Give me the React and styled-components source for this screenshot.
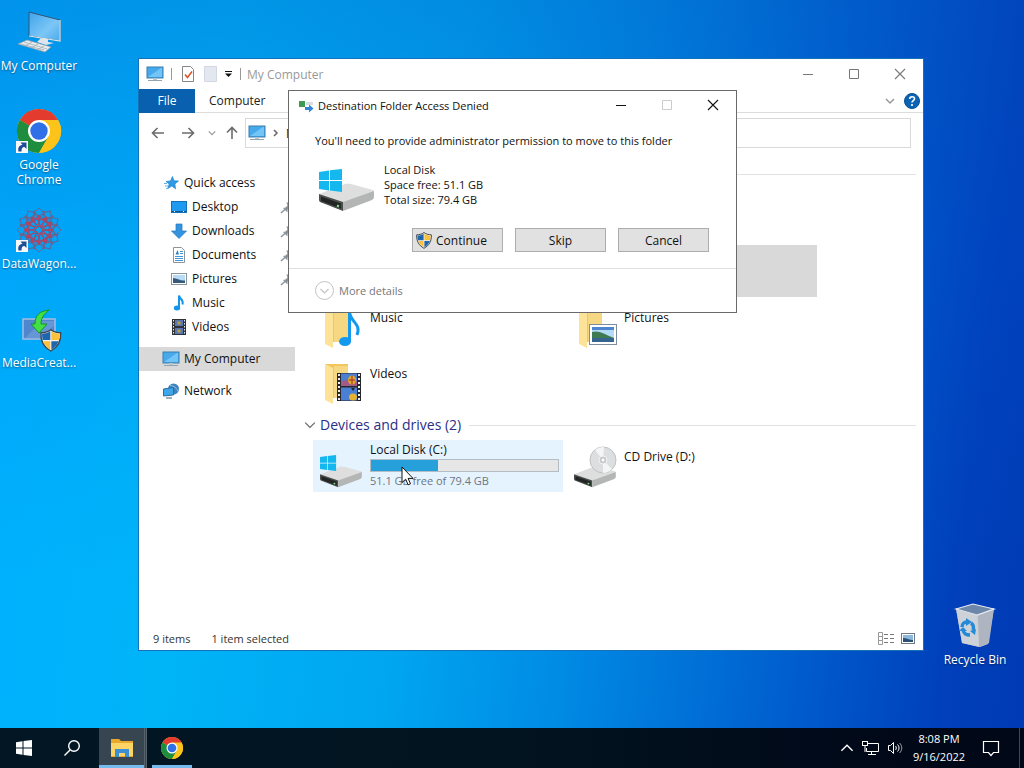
import React from "react";
import styled, { createGlobalStyle, css } from "styled-components";

const GlobalStyle = createGlobalStyle`
  *, *::before, *::after { box-sizing: border-box; }
  body {
    margin: 0;
    font-family: "Open Sans", "Noto Sans", "Liberation Sans", sans-serif;
    font-size: 12px;
    line-height: 15px;
    color: #111;
  }
  button, input { font: inherit; color: inherit; }
  svg { display: block; flex: none; }
`;

/* ---------- desktop ---------- */

const Screen = styled.div`
  min-height: 100vh;
  display: flex;
  flex-direction: column;
  background:
    linear-gradient(180deg, rgba(4, 80, 190, 0.3) 0%, rgba(0, 90, 220, 0.12) 35%, rgba(0, 90, 220, 0) 75%),
    linear-gradient(97deg, #00b0ff 0%, #00b4f8 22%, #00a6f0 42%, #008ae4 58%, #005ece 78%, #0040ba 92%, #003ab4 100%);
`;

const Workspace = styled.main`
  position: relative;
  flex: 1;
  min-height: 728px;
`;

const IconColumn = styled.nav`
  display: flex;
  flex-direction: column;
  width: 78px;
  padding-top: 8px;
`;

const Shortcut = styled.a`
  display: flex;
  flex-direction: column;
  align-items: center;
  gap: 2px;
  height: 99px;
  color: #fff;
  text-align: center;
  text-decoration: none;
  text-shadow: 0 1px 2px rgba(0, 0, 0, 0.45);
`;

const BinSpot = styled.div`
  position: absolute;
  right: 9px;
  bottom: 27px;
  width: 80px;
`;

/* ---------- explorer ---------- */

const Explorer = styled.section`
  position: absolute;
  inset: 58px 100px 77px 138px;
  display: flex;
  flex-direction: column;
  border: 1px solid #1672b8;
  background: #fff;
`;

const TitleBar = styled.header`
  display: flex;
  align-items: center;
  height: 30px;
  padding-left: 7px;
  color: #999;
`;

const Divider = styled.span`
  width: 1px;
  height: 12px;
  background: #999;
`;

const QuickTools = styled.div`
  display: flex;
  align-items: center;
  gap: 7px;
  margin-right: 6px;
`;

const WindowControls = styled.div`
  display: flex;
  align-self: stretch;
  margin-left: auto;
`;

const IconButton = styled.button`
  display: flex;
  align-items: center;
  justify-content: center;
  width: ${(p) => p.$w || 46}px;
  height: ${(p) => p.$h || 30}px;
  padding: 0;
  border: 0;
  background: transparent;
`;

const Ribbon = styled.div`
  display: flex;
  align-items: center;
  height: 24px;
  border-bottom: 1px solid #dcdcdc;
`;

const Tab = styled.button`
  height: 24px;
  padding: 0 14px;
  border: 0;
  background: transparent;
  color: #222;
  ${(p) =>
    p.$primary &&
    css`
      width: 56px;
      background: #0860ae;
      color: #fff;
    `}
`;

const RibbonEnd = styled.div`
  display: flex;
  align-items: center;
  margin-left: auto;
  padding-right: 3px;
`;

const NavBar = styled.div`
  display: flex;
  align-items: center;
  height: 40px;
  padding: 0 12px 0 4px;
`;

const Address = styled.div`
  display: flex;
  align-items: center;
  gap: 5px;
  flex: 1;
  height: 30px;
  margin-left: 2px;
  padding-left: 2px;
  border: 1px solid #d9d9d9;
`;

const Body = styled.div`
  display: flex;
  flex: 1;
`;

const Sidebar = styled.nav`
  width: 156px;
  padding-top: 18px;
`;

const SideItem = styled.a`
  display: flex;
  align-items: center;
  gap: 4px;
  height: 24px;
  padding: 0 0 1px ${(p) => (p.$nested ? 31 : 23)}px;
  margin-bottom: ${(p) => (p.$gap ? 8 : 0)}px;
  background: ${(p) => (p.$active ? "#d9d9d9" : "transparent")};
  color: #111;
  text-decoration: none;
`;

const PinSlot = styled.span`
  margin-left: auto;
`;

const Content = styled.div`
  flex: 1;
  padding: 10px 7px 0 9px;
`;

const GroupHeader = styled.h2`
  display: flex;
  align-items: center;
  gap: 4px;
  height: 22px;
  margin: 0;
  font-size: 14px;
  font-weight: 400;
  line-height: 20px;
  color: #2a2f86;
  &::after {
    content: "";
    flex: 1;
    height: 1px;
    margin-left: 4px;
    background: #e2e2e2;
  }
`;

const Tiles = styled.div`
  display: grid;
  grid-template-columns: repeat(auto-fill, 250px);
  gap: 4px;
  padding: 4px 0 5px 9px;
`;

const Tile = styled.div`
  display: flex;
  gap: 5px;
  height: 52px;
  padding: 2px 4px;
  background: ${(p) => p.$fill || "transparent"};
`;

const TileText = styled.div`
  flex: 1;
  padding-top: ${(p) => (p.$detail ? 0 : 7)}px;
`;

const Capacity = styled.div`
  height: 13px;
  margin: 2px 0 1px;
  border: 1px solid #b4bcc4;
  background: #e6e6e6;
`;

const Used = styled.div`
  height: 100%;
  background: #26a0da;
`;

const Muted = styled.div`
  font-size: 11px;
  color: #6d7680;
`;

const StatusBar = styled.footer`
  display: flex;
  align-items: center;
  gap: 21px;
  height: 23px;
  padding: 0 8px 0 14px;
  font-size: 11px;
  color: #333;
`;

const ViewModes = styled.div`
  display: flex;
  gap: 6px;
  margin-left: auto;
`;

/* ---------- dialog ---------- */

const Dialog = styled.section`
  position: absolute;
  top: 90px;
  left: 288px;
  width: 449px;
  border: 1px solid #6a6a6a;
  background: #fff;
  font-size: 11px;
`;

const DialogTitle = styled.header`
  display: flex;
  align-items: center;
  gap: 4px;
  height: 29px;
  padding-left: 9px;
`;

const DialogBody = styled.div`
  padding: 13px 27px 16px 26px;
`;

const Message = styled.p`
  margin: 0 0 14px;
`;

const DiskInfo = styled.div`
  display: flex;
  gap: 9px;
  height: 66px;
`;

const Actions = styled.div`
  display: flex;
  justify-content: flex-end;
  gap: 12px;
  font-size: 12px;
`;

const ActionButton = styled.button`
  display: flex;
  align-items: center;
  justify-content: center;
  gap: 4px;
  width: 91px;
  height: 24px;
  padding: ${(p) => (p.$shield ? "0 12px 0 0" : "0")};
  border: 1px solid #adadad;
  background: #e1e1e1;
`;

const Details = styled.footer`
  display: flex;
  align-items: center;
  height: 44px;
  padding-left: 25px;
  border-top: 1px solid #dfdfdf;
`;

const DetailsToggle = styled.button`
  display: flex;
  align-items: center;
  gap: 4px;
  padding: 0;
  border: 0;
  background: transparent;
  color: #777;
`;

const Pointer = styled.div`
  position: absolute;
  left: 401px;
  top: 466px;
  pointer-events: none;
`;

/* ---------- taskbar ---------- */

const Taskbar = styled.footer`
  display: flex;
  align-items: stretch;
  height: 40px;
  background: linear-gradient(90deg, #021624 0%, #021420 50%, #010a1a 80%, #010818 100%);
  color: #fff;
`;

const TaskButton = styled.button`
  display: flex;
  align-items: center;
  justify-content: center;
  width: 48px;
  padding: 0;
  border: 0;
  background: transparent;
  ${(p) =>
    p.$running &&
    css`
      width: 49px;
      background: linear-gradient(#76b9ed, #76b9ed) bottom / 40px 3px no-repeat;
    `}
  ${(p) =>
    p.$focused &&
    css`
      background: linear-gradient(#76b9ed, #76b9ed) bottom / 100% 3px no-repeat, #36454f;
      width: 48px;
      margin-left: 3px;
      border-right: 3px double #56636c;
    `}
`;

const Tray = styled.div`
  display: flex;
  align-items: center;
  gap: 8px;
  margin-left: auto;
  padding-right: 3px;
  border-right: 1px solid #3c4856;
  margin-right: 4px;
`;

const Clock = styled.time`
  text-align: center;
  font-size: 11px;
  line-height: 18px;
  width: 54px;
  white-space: nowrap;
`;

const Notice = styled.span`
  padding: 0 16px 0 8px;
`;

/* ---------- drawings ---------- */

const ShortcutMark = () => (
  <g>
    <rect x="1" y="34" width="12" height="12" fill="#f6f8fa" />
    <path d="M3.500 44.500c-1-4 1-6.500 4-6.500l-2-2.500H11.500V42l-2-2c-2.500 0-3 2-3 4.500z" fill="#1e4f96" />
  </g>
);

const ComputerLarge = () => (
  <svg width="48" height="48" viewBox="0 0 48 48">
    <defs>
      <linearGradient id="scr" x1="0" y1="0" x2="1" y2="1">
        <stop offset="0" stopColor="#3fa3ea" />
        <stop offset=".6" stopColor="#7cc6f6" />
        <stop offset="1" stopColor="#4aabed" />
      </linearGradient>
    </defs>
    <path d="M14 4l31 8v21l-31-5z" fill="url(#scr)" stroke="#2c5776" strokeWidth="1" />
    <path d="M45 12v21l-31-5" fill="none" stroke="#dfe8ee" strokeWidth="1.200" />
    <path d="M26 30l7 1v3l6 1-8 2-9-3z" fill="#dfe5e9" />
    <path d="M12 32l24 7-6 5L3 36z" fill="#e9edef" stroke="#8f9ba3" strokeWidth=".7" />
    <path d="M9 34l23 7M6 36l23 6M17 34l-7 4M23 36l-7 4M29 38l-7 4" stroke="#9aa6ad" strokeWidth=".7" />
  </svg>
);

const ChromeArt = () => (
  <g>
    <circle cx="24" cy="24" r="22" fill="#fbc116" />
    <path d="M24 24L4.900 13A22 22 0 0 1 43.100 13z" fill="#e33b2e" />
    <path d="M4.900 13A22 22 0 0 0 24 46l9.500-16.500L24 24z" fill="#1e8e3e" />
    <path d="M24 13h19.100A22 22 0 0 1 24 46l9.500-16.500z" fill="#fcc31a" />
    <circle cx="24" cy="24" r="11" fill="#fff" />
    <circle cx="24" cy="24" r="8.700" fill="#2f6fe8" />
  </g>
);

const ChromeLarge = () => (
  <svg width="48" height="48" viewBox="0 0 48 48">
    <ChromeArt />
    <ShortcutMark />
  </svg>
);

const WagonLarge = () => (
  <svg width="48" height="48" viewBox="0 0 48 48">
    <g fill="none" strokeWidth="1">
      {[0, 30, 60, 90, 120, 150, 180, 210, 240, 270, 300, 330].map((a) => (
        <g key={a} transform={`rotate(${a} 24 24)`}>
          <path d="M24 2l5 5-5 6-5-6z" stroke="#5f6596" />
          <path d="M18 5l12 11M30 5L18 16" stroke="#746088" />
          <path d="M24 9l5 7-5 5-5-5z" stroke="#a44566" />
          <circle cx="24" cy="12" r="1.300" fill="#c93a55" stroke="none" />
        </g>
      ))}
    </g>
    <ShortcutMark />
  </svg>
);

const ShieldArt = () => (
  <g>
    <path d="M8 .5c2 1.700 4.500 2.200 7.300 2.300C15.700 9 13 13.700 8 16.300 3 13.700.3 9 .7 2.800 3.500 2.700 6 2.200 8 .5z" fill="#f3f3ee" stroke="#3f464c" strokeWidth="1" />
    <path d="M7.600 1.700C6 2.900 4 3.400 1.500 3.600c0 1.900.2 3.100.5 4.600h5.600z" fill="#1d65ad" />
    <path d="M8.400 1.700c1.600 1.200 3.600 1.700 6.100 1.900 0 1.900-.2 3.100-.5 4.600H8.400z" fill="#fbc13d" />
    <path d="M2.200 9h5.400v6.200C5 13.700 3.100 11.500 2.200 9z" fill="#fbc13d" />
    <path d="M13.800 9H8.400v6.200c2.600-1.500 4.500-3.700 5.400-6.200z" fill="#1d65ad" />
  </g>
);

const MediaLarge = () => (
  <svg width="48" height="48" viewBox="0 0 48 48">
    <rect x="8" y="14" width="32" height="20" fill="#4f86cd" stroke="#a6bfe0" strokeWidth="1.500" />
    <path d="M10 33l17-17h12v5L24 33z" fill="#7ba6de" opacity=".5" />
    <path d="M34 5c-9 1-14 5-14 14h-4l8 9 8-9h-6c0-6 3-10 8-14z" fill="#43df46" stroke="#17932b" strokeWidth="1" />
    <g transform="translate(25 24) scale(1.350)">
      <ShieldArt />
    </g>
  </svg>
);

const BinLarge = () => (
  <svg width="48" height="48" viewBox="0 0 48 48">
    <path d="M5 6l38 0-6 36-8 3-18-4z" fill="#c4c9d2" />
    <path d="M27 12l16-6-5 35-10 4z" fill="#aeb5c0" />
    <path d="M5 7l17-5 21 5-17 6z" fill="#6d87a8" stroke="#e6ebf2" strokeWidth="1.200" />
    <path d="M5 7l21 6 2 32-17-4z" fill="#cfd3da" opacity=".85" />
    <g fill="none" stroke="#2489d6" strokeWidth="3.400">
      <path d="M11 25c0-3 2-5 5-5" />
      <path d="M20 21c3 2 3 4 2 7" />
      <path d="M19 33c-4 0-6-1-7-5" />
    </g>
    <path d="M15 16l6 4-6 4zM25 27l-1 6-5-4zM8 29l4-4 4 4z" fill="#2489d6" />
  </svg>
);

const Monitor = ({ w = 18 }) => (
  <svg width={w} height="16" viewBox="0 0 18 16">
    <rect x="1" y="1" width="16" height="11" fill="#46a9ec" stroke="#3b7fae" />
    <path d="M2 11l13-9h1v9z" fill="#74c5f7" />
    <path d="M7 12h4v2H7z" fill="#b9c6cf" />
    <path d="M2 14.500h14" stroke="#93a4b0" />
  </svg>
);

const CheckPage = () => (
  <svg width="14" height="16" viewBox="0 0 14 16">
    <path d="M1.500.5h8l3 3v12h-11z" fill="#fff" stroke="#858585" />
    <path d="M4 8.500l2.500 3 4.500-6" fill="none" stroke="#d9582e" strokeWidth="1.600" />
  </svg>
);

const BlankPage = () => (
  <svg width="14" height="16" viewBox="0 0 14 16">
    <path d="M.5.500h12v15H.5z" fill="#e3e8f0" stroke="#d2d8e2" />
  </svg>
);

const MenuTick = () => (
  <svg width="8" height="8" viewBox="0 0 8 8">
    <path d="M0 1.500h7" stroke="#111" />
    <path d="M0 3.500h7L3.500 7z" fill="#111" />
  </svg>
);

const Minimize = ({ color = "#777" }) => (
  <svg width="12" height="12" viewBox="0 0 12 12">
    <path d="M1 6.500h10" stroke={color} />
  </svg>
);
const Maximize = ({ color = "#777" }) => (
  <svg width="12" height="12" viewBox="0 0 12 12">
    <path d="M1.500 1.500h9v9h-9z" fill="none" stroke={color} />
  </svg>
);
const Close = ({ color = "#777" }) => (
  <svg width="12" height="12" viewBox="0 0 12 12">
    <path d="M1 1l10 10M11 1L1 11" stroke={color} strokeWidth="1.100" />
  </svg>
);

const Chevron = ({ size = 10, color = "#999", dir = "down", weight = 1.5 }) => (
  <svg width={size} height={size} viewBox="0 0 10 10">
    <path
      d={dir === "down" ? "M1 3l4 4 4-4" : dir === "up" ? "M1 7l4-4 4 4" : "M3 2l3 3-3 3"}
      fill="none"
      stroke={color}
      strokeWidth={weight}
    />
  </svg>
);

const Arrow = ({ dir }) => (
  <svg width="14" height="14" viewBox="0 0 14 14">
    <g transform={`rotate(${dir === "left" ? 0 : dir === "up" ? 90 : 180} 7 7)`}>
      <path d="M13 7H1.500M6.500 2l-5 5 5 5" fill="none" stroke="#6b6b6b" strokeWidth="1.600" />
    </g>
  </svg>
);

const Help = () => (
  <svg width="16" height="16" viewBox="0 0 16 16">
    <circle cx="8" cy="8" r="7.500" fill="#0a63b4" stroke="#07508f" />
    <path d="M5.700 6c0-3 4.800-3 4.800-.2C10.500 7.600 8 7.600 8 9.500" fill="none" stroke="#fff" strokeWidth="1.600" />
    <circle cx="8" cy="12" r="1.100" fill="#fff" />
  </svg>
);

const StarIcon = () => (
  <svg width="18" height="16" viewBox="0 0 18 16">
    <path d="M10.500 1.500l1.400 4.300 4.600.2-3.600 3 .6 4.800-3.700-2.800-4 2.500 1.400-4.600L4 6.500l4.500-.6z" fill="#2f9be6" stroke="#2383c9" strokeWidth=".7" />
    <path d="M2 8.500h3M3 11h3M4 13.500h2" stroke="#5fb2ec" />
  </svg>
);
const DesktopIcon = () => (
  <svg width="18" height="16" viewBox="0 0 18 16">
    <rect x="1.500" y="2.500" width="15" height="11" fill="#1e9bf0" stroke="#176fb5" />
    <path d="M2 12.500h14" stroke="#0d5795" />
    <path d="M4 12.500h1M13 12.500h1" stroke="#fff" />
  </svg>
);
const DownloadIcon = () => (
  <svg width="18" height="16" viewBox="0 0 18 16">
    <path d="M6 1h6v7h4.500L9 15.500 1.500 8H6z" fill="#3594e0" stroke="#2377bb" strokeWidth=".7" />
  </svg>
);
const DocumentIcon = () => (
  <svg width="18" height="16" viewBox="0 0 18 16">
    <path d="M3.500.5h8l3 3v12h-11z" fill="#fff" stroke="#8c959c" />
    <path d="M10 4.500h3M10 6.500h3M5 9.500h8M5 11.500h8M5 13.500h8" stroke="#4497d6" />
    <path d="M5.500 7.500l2-4.500 1.500 4.500z" fill="#2f7fc0" />
  </svg>
);
const PictureIcon = () => (
  <svg width="18" height="16" viewBox="0 0 18 16">
    <rect x="1.500" y="2.500" width="15" height="11" fill="#fff" stroke="#8a949d" />
    <rect x="3" y="4" width="12" height="8" fill="#b9dcf6" />
    <path d="M3 7c4 0 7 3 12 2.500V12H3z" fill="#34597c" />
  </svg>
);
const NoteIcon = () => (
  <svg width="18" height="16" viewBox="0 0 18 16">
    <path d="M9 13V.5c.5 3.500 5 4 3.500 9" fill="none" stroke="#1495ea" strokeWidth="2" />
    <ellipse cx="7" cy="13" rx="3.200" ry="2.500" fill="#1495ea" />
  </svg>
);
const FilmIcon = () => (
  <svg width="18" height="16" viewBox="0 0 18 16">
    <rect x="2" y="0" width="14" height="16" fill="#2e3135" />
    <path d="M3.500 1v15M14.500 1v15" stroke="#e9edf0" strokeDasharray="1.500 1.500" />
    <rect x="5" y="1" width="8" height="6" fill="#5a77b5" />
    <rect x="5" y="9" width="8" height="6" fill="#5a77b5" />
    <circle cx="9" cy="4" r="1.800" fill="#b6a03c" />
    <circle cx="9" cy="12" r="1.800" fill="#b6a03c" />
  </svg>
);
const NetworkIcon = () => (
  <svg width="18" height="16" viewBox="0 0 18 16">
    <circle cx="11.500" cy="6" r="5.500" fill="#3f83bd" />
    <path d="M8 2.500c4 0 7 3 8 6" fill="none" stroke="#8ec9ef" />
    <path d="M1.500 6l10-1.500v7.500l-10 1z" fill="#40a6ea" stroke="#2a6d9f" />
    <path d="M4 15h6" stroke="#7d93a3" strokeWidth="1.500" />
  </svg>
);
const Pin = () => (
  <svg width="15" height="14" viewBox="0 0 15 14">
    <path d="M7 2l6 6-1.500.5-2-.5-2 2v2.500L3 8l2.500-.5 2-2L6.500 3z" fill="#8c959c" />
    <path d="M5 9.500L1 13" stroke="#8c959c" strokeWidth="1.500" />
  </svg>
);

const FolderBack = () => (
  <g transform="translate(3 0)">
    <path d="M6 5h22v34H12L6 36z" fill="#f0c65d" />
    <path d="M14 7h14v32H14z" fill="#f7d882" />
    <path d="M5 5l8 4v36l-8-4z" fill="#fde398" />
  </g>
);
const MusicFolder = () => (
  <svg width="48" height="48" viewBox="0 0 48 48">
    <FolderBack />
    <path d="M32.500 39V9c1 11 12 11 7.500 23" fill="none" stroke="#1399ee" strokeWidth="3" />
    <ellipse cx="28" cy="38.500" rx="6" ry="4.500" fill="#1399ee" />
  </svg>
);
const PictureFolder = () => (
  <svg width="48" height="48" viewBox="0 0 48 48">
    <FolderBack />
    <rect x="18.500" y="21.500" width="27" height="20" fill="#fff" stroke="#7e8d9b" />
    <rect x="21" y="24" width="22" height="15" fill="#b4dbf5" />
    <path d="M21 24h22v3H21z" fill="#4d86cd" />
    <path d="M21 29c7-2 12 2 22 6v1H21z" fill="#3e7b53" />
    <path d="M21 35h22v4H21z" fill="#35648e" />
  </svg>
);
const VideoFolder = () => (
  <svg width="48" height="48" viewBox="0 0 48 48">
    <FolderBack />
    <rect x="20" y="14" width="24" height="28" fill="#26282c" />
    <path d="M22 15v27M42 15v27" stroke="#eef1f4" strokeWidth="2" strokeDasharray="2 2" />
    <rect x="24" y="14.500" width="16" height="12.500" fill="#4a7fd4" />
    <rect x="24" y="28.500" width="16" height="13" fill="#4a7fd4" />
    <path d="M24 23c5-4 9 0 16-1v5H24z" fill="#a25a86" />
    <ellipse cx="35" cy="21" rx="4" ry="4.500" fill="#e0a52d" />
    <path d="M35 16.500v9M32 21h6" stroke="#a72e2d" />
    <ellipse cx="36" cy="38" rx="4" ry="3.500" fill="#e5b331" />
    <path d="M34 29h4l-2 3z" fill="#26282c" />
  </svg>
);

const WindowsFlag = () => (
  <path d="M0 3l10-1.500V11H0zM11 1.300L23 0v11H11zM0 12h10v9.500L0 20zM11 12h12v11l-12-1.500z" fill="#14b7ee" />
);
const DriveBody = () => (
  <g>
    <path d="M0 11L26 1q3-1 6 0l22 6q2 1 0 2L24 20z" fill="#dedede" />
    <path d="M0 11l24 8v9L1 19q-1-1-1-2z" fill="#4b4e4d" />
    <path d="M24 19L55 8v6q0 2-2 3L24 28z" fill="#b4b6b6" />
    <path d="M2 13.500l20 7v5L2 18z" fill="#222524" />
    <path d="M18 22.500l2 1" stroke="#7ce28f" strokeWidth="2" />
  </g>
);
const DriveLarge = () => (
  <svg width="60" height="50" viewBox="0 0 60 50">
    <g transform="translate(4 21)">
      <DriveBody />
    </g>
    <g transform="translate(4 7)">
      <WindowsFlag />
    </g>
  </svg>
);
const DriveTile = () => (
  <svg width="48" height="48" viewBox="0 0 48 48">
    <g transform="translate(3 24) scale(.76)">
      <DriveBody />
    </g>
    <g transform="translate(3 13) scale(.7)">
      <WindowsFlag />
    </g>
  </svg>
);
const CdTile = () => (
  <svg width="48" height="48" viewBox="0 0 48 48">
    <g transform="translate(3 24) scale(.76)">
      <DriveBody />
    </g>
    <circle cx="32" cy="18" r="13" fill="#dcdedf" stroke="#bfc2c4" />
    <path d="M32 18L24 8a13 13 0 0 1 9-3zM32 18l9 9a13 13 0 0 1-9 4z" fill="#f4f5f5" />
    <circle cx="32" cy="18" r="4" fill="#c4c9cc" stroke="#f4f4f4" />
    <circle cx="32" cy="18" r="1.500" fill="#fff" />
  </svg>
);
const MoveIcon = () => (
  <svg width="16" height="14" viewBox="0 0 16 14">
    <rect x="1" y="2" width="6" height="6" fill="#3f9a55" />
    <path d="M8 3h7v3H8z" fill="#d7dfe4" />
    <path d="M7 8h4V5.500l4.500 4-4.500 4V11H7z" fill="#3285d6" />
  </svg>
);
const Shield = () => (
  <svg width="16" height="17" viewBox="0 0 16 17">
    <ShieldArt />
  </svg>
);
const DetailsChevron = () => (
  <svg width="21" height="21" viewBox="0 0 21 21">
    <circle cx="10.500" cy="10.500" r="9" fill="#fff" stroke="#c4c4c4" />
    <path d="M6.500 9l4 4 4-4" fill="none" stroke="#c4c4c4" strokeWidth="1.200" />
  </svg>
);
const ListMode = () => (
  <svg width="18" height="14" viewBox="0 0 18 14">
    <path d="M1.500.5h4v4h-4zM1.500 4.500h4v4h-4zM1.500 8.500h4v4h-4z" fill="none" stroke="#999" />
    <path d="M7 2.500h4M13 2.500h4M7 6.500h4M13 6.500h4M7 10.500h4M13 10.500h4" stroke="#777" />
  </svg>
);
const TileMode = () => (
  <svg width="14" height="14" viewBox="0 0 14 14">
    <rect x=".5" y="1.500" width="13" height="10" fill="#fff" stroke="#6e7a86" />
    <rect x="2" y="3" width="10" height="7" fill="#8cb8de" />
    <path d="M2 6c4 0 6 2 10 2v2H2z" fill="#2c4f77" />
  </svg>
);
const Cursor = () => (
  <svg width="14" height="20" viewBox="0 0 14 20">
    <path d="M1 1v15.500l3.700-3.300 2.400 5.600 2.400-1-2.400-5.400H12z" fill="#fff" stroke="#111" />
  </svg>
);

const StartLogo = () => (
  <svg width="16" height="16" viewBox="0 0 16 16">
    <path d="M0 2.200l6.500-.9v6.200H0zM7.500 1.100L16 0v7.500H7.500zM0 8.500h6.500v6.200L0 13.800zM7.500 8.500H16V16l-8.500-1.100z" fill="#fff" />
  </svg>
);
const SearchGlyph = () => (
  <svg width="18" height="18" viewBox="0 0 18 18">
    <circle cx="11" cy="7" r="5.300" fill="none" stroke="#fff" strokeWidth="1.400" />
    <path d="M7 11l-5.500 5.500" stroke="#fff" strokeWidth="1.400" />
  </svg>
);
const FolderGlyph = () => (
  <svg width="24" height="20" viewBox="0 0 24 20">
    <path d="M1 1h8l2 2h12v16H1z" fill="#e9a92b" />
    <path d="M1 5h22v13H1z" fill="#fcd566" />
    <path d="M5 11h14v8h-4v-4H9v4H5z" fill="#3b8fd3" />
  </svg>
);
const ChromeSmall = () => (
  <svg width="24" height="24" viewBox="0 0 48 48">
    <ChromeArt />
  </svg>
);
const NetTray = () => (
  <svg width="17" height="16" viewBox="0 0 17 16">
    <g fill="none" stroke="#fff">
      <path d="M6 3.500h10.500v8H4.500V8" />
      <rect x=".5" y="1.500" width="5" height="4" />
      <path d="M3 5.500V12M9.500 11.500v3M6 14.500h8" />
    </g>
  </svg>
);
const SoundTray = () => (
  <svg width="17" height="16" viewBox="0 0 17 16">
    <g fill="none" stroke="#fff">
      <path d="M1.500 5.500h2l3-3v11l-3-3h-2z" />
      <path d="M8.500 6c1 1 1 3 0 4M10.500 4.500c2 2 2 5 0 7" />
      <path d="M12.500 3c3 3 3 7 0 10" opacity=".6" />
    </g>
  </svg>
);
const NoticeGlyph = () => (
  <svg width="18" height="18" viewBox="0 0 18 18">
    <path d="M1.500 2.500h15v11h-5l-2.500 3-2.500-3h-5z" fill="none" stroke="#fff" strokeWidth="1.200" />
  </svg>
);

/* ---------- data ---------- */

const shortcuts = [
  { label: "My Computer", icon: <ComputerLarge /> },
  { label: "Google Chrome", icon: <ChromeLarge /> },
  { label: "DataWagon...", icon: <WagonLarge /> },
  { label: "MediaCreat...", icon: <MediaLarge /> },
];

const places = [
  { label: "Quick access", icon: <StarIcon /> },
  { label: "Desktop", icon: <DesktopIcon />, nested: true, pinned: true },
  { label: "Downloads", icon: <DownloadIcon />, nested: true, pinned: true },
  { label: "Documents", icon: <DocumentIcon />, nested: true, pinned: true },
  { label: "Pictures", icon: <PictureIcon />, nested: true, pinned: true },
  { label: "Music", icon: <NoteIcon />, nested: true },
  { label: "Videos", icon: <FilmIcon />, nested: true, gap: true },
  { label: "My Computer", icon: <Monitor />, active: true, gap: true },
  { label: "Network", icon: <NetworkIcon /> },
];

const folders = [
  {},
  {},
  {},
  { fill: "#d9d9d9" },
  { label: "Music", icon: <MusicFolder /> },
  { label: "Pictures", icon: <PictureFolder /> },
  { label: "Videos", icon: <VideoFolder /> },
];

export default function App() {
  return (
    <Screen>
      <GlobalStyle />
      <Workspace>
        <IconColumn>
          {shortcuts.map((s) => (
            <Shortcut key={s.label} href="#">
              {s.icon}
              {s.label}
            </Shortcut>
          ))}
        </IconColumn>
        <BinSpot>
          <Shortcut href="#">
            <BinLarge />
            Recycle Bin
          </Shortcut>
        </BinSpot>

        <Explorer>
          <TitleBar>
            <QuickTools>
              <Monitor />
              <Divider />
              <IconButton $w={18} $h={20}>
                <CheckPage />
              </IconButton>
              <BlankPage />
              <MenuTick />
              <Divider />
            </QuickTools>
            My Computer
            <WindowControls>
              <IconButton><Minimize /></IconButton>
              <IconButton><Maximize /></IconButton>
              <IconButton><Close /></IconButton>
            </WindowControls>
          </TitleBar>
          <Ribbon>
            <Tab $primary>File</Tab>
            <Tab>Computer</Tab>
            <RibbonEnd>
              <IconButton $w={28} $h={22}><Chevron /></IconButton>
              <Help />
            </RibbonEnd>
          </Ribbon>
          <NavBar>
            <IconButton $w={30}><Arrow dir="left" /></IconButton>
            <IconButton $w={30}><Arrow dir="right" /></IconButton>
            <IconButton $w={18}><Chevron size={8} /></IconButton>
            <IconButton $w={22}><Arrow dir="up" /></IconButton>
            <Address>
              <Monitor />
              <Chevron dir="right" size={10} color="#666" />
              My Computer
            </Address>
          </NavBar>
          <Body>
            <Sidebar>
              {places.map((p) => (
                <SideItem key={p.label} href="#" $nested={p.nested} $active={p.active} $gap={p.gap}>
                  {p.icon}
                  {p.label}
                  {p.pinned && (
                    <PinSlot>
                      <Pin />
                    </PinSlot>
                  )}
                </SideItem>
              ))}
            </Sidebar>
            <Content>
              <GroupHeader />
              <Tiles>
                {folders.map((f, i) => (
                  <Tile key={i} $fill={f.fill}>
                    {f.icon}
                    <TileText>{f.label}</TileText>
                  </Tile>
                ))}
              </Tiles>
              <GroupHeader>
                <Chevron size={12} color="#666" weight={1} />
                Devices and drives (2)
              </GroupHeader>
              <Tiles>
                <Tile $fill="#e5f3ff">
                  <DriveTile />
                  <TileText $detail>
                    Local Disk (C:)
                    <Capacity>
                      <Used style={{ width: `${(1 - 51.1 / 79.4) * 100}%` }} />
                    </Capacity>
                    <Muted>51.1 GB free of 79.4 GB</Muted>
                  </TileText>
                </Tile>
                <Tile>
                  <CdTile />
                  <TileText>CD Drive (D:)</TileText>
                </Tile>
              </Tiles>
            </Content>
          </Body>
          <StatusBar>
            <span>9 items</span>
            <span>1 item selected</span>
            <ViewModes>
              <ListMode />
              <TileMode />
            </ViewModes>
          </StatusBar>
        </Explorer>

        <Dialog role="dialog">
          <DialogTitle>
            <MoveIcon />
            Destination Folder Access Denied
            <WindowControls>
              <IconButton $h={28}><Minimize color="#111" /></IconButton>
              <IconButton $h={28}><Maximize color="#ccc" /></IconButton>
              <IconButton $h={28}><Close color="#111" /></IconButton>
            </WindowControls>
          </DialogTitle>
          <DialogBody>
            <Message>You'll need to provide administrator permission to move to this folder</Message>
            <DiskInfo>
              <DriveLarge />
              <div>
                Local Disk
                <br />
                Space free: 51.1 GB
                <br />
                Total size: 79.4 GB
              </div>
            </DiskInfo>
            <Actions>
              <ActionButton $shield>
                <Shield />
                Continue
              </ActionButton>
              <ActionButton>Skip</ActionButton>
              <ActionButton>Cancel</ActionButton>
            </Actions>
          </DialogBody>
          <Details>
            <DetailsToggle>
              <DetailsChevron />
              More details
            </DetailsToggle>
          </Details>
        </Dialog>

        <Pointer>
          <Cursor />
        </Pointer>
      </Workspace>

      <Taskbar>
        <TaskButton aria-label="Start"><StartLogo /></TaskButton>
        <TaskButton aria-label="Search"><SearchGlyph /></TaskButton>
        <TaskButton aria-label="File Explorer" $running $focused><FolderGlyph /></TaskButton>
        <TaskButton aria-label="Google Chrome" $running><ChromeSmall /></TaskButton>
        <Tray>
          <Chevron dir="up" size={14} color="#fff" weight={1} />
          <NetTray />
          <SoundTray />
          <Clock>
            8:08 PM
            <br />
            9/16/2022
          </Clock>
          <Notice>
            <NoticeGlyph />
          </Notice>
        </Tray>
      </Taskbar>
    </Screen>
  );
}
